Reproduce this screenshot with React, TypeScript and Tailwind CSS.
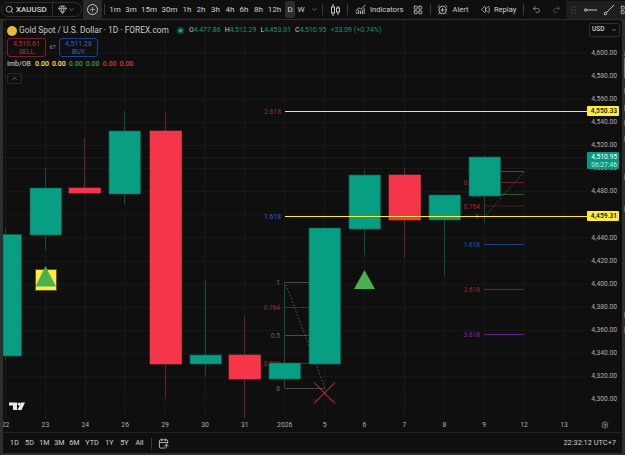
import React from 'react'
import { Search, ChevronDown, ChevronUp, Plus, Undo2, Redo2, AlarmClockPlus, ChartNoAxesCombined, LayoutGrid, Rewind, Gem, CalendarArrowUp, Settings } from 'lucide-react'

type Candle = { x: number; open: number; close: number; high: number; low: number; up: boolean }

const GREEN = '#089e84'
const RED = '#f5364a'

const candles: Candle[] = [
    { x: 3, open: 234.5, close: 356, high: 228, low: 360, up: true },
    { x: 30, open: 188, close: 235, high: 168, low: 250, up: true },
    { x: 69, open: 188, close: 193, high: 138, low: 193, up: false },
    { x: 109, open: 131, close: 194, high: 111, low: 204, up: true },
    { x: 150, open: 131, close: 364, high: 112, low: 398, up: false },
    { x: 190, open: 355, close: 364, high: 280, low: 375, up: true },
    { x: 229, open: 355, close: 379, high: 316, low: 418, up: false },
    { x: 269, open: 363, close: 379, high: 363, low: 388, up: true },
    { x: 309, open: 228, close: 364, high: 228, low: 364, up: true },
    { x: 349, open: 175, close: 229, high: 170, low: 255, up: true },
    { x: 389, open: 175, close: 220, high: 168, low: 258, up: false },
    { x: 429, open: 195, close: 220, high: 195, low: 276, up: true },
    { x: 469, open: 157, close: 196, high: 155, low: 223, up: true },
]

const prices = ['4,600.00', '4,580.00', '4,560.00', '4,540.00', '4,520.00', '4,500.00', '4,480.00', '', '4,440.00', '4,420.00', '4,400.00', '4,380.00', '4,360.00', '4,340.00', '4,320.00', '4,300.00']
const dates = ['22', '23', '24', '26', '29', '30', '31', '2026', '5', '6', '7', '8', '9', '12', '13']

const intervals = [
    { label: '1m', w: 'w-[16px]' },
    { label: '3m', w: 'w-[16px]' },
    { label: '15m', w: 'w-[20px]' },
    { label: '30m', w: 'w-[21px]' },
    { label: '1h', w: 'w-[14px]' },
    { label: '2h', w: 'w-[14px]' },
    { label: '3h', w: 'w-[15px]' },
    { label: '4h', w: 'w-[14px]' },
    { label: '6h', w: 'w-[14px]' },
    { label: '8h', w: 'w-[15px]' },
    { label: '12h', w: 'w-[17px]' },
]

const fibA = [
    { y: 282, label: '1', line: '#4a4a4a', text: '#787878' },
    { y: 307, label: '0.764', line: '#6e1f26', text: '#a32a33' },
    { y: 335, label: '0.5', line: '#2f5a34', text: '#3e7d44' },
    { y: 363, label: '0.236', line: '#6e1f26', text: '#a32a33' },
    { y: 388, label: '0', line: '#4a4a4a', text: '#787878' },
]

const fibB = [
    { y: 171, label: '0', line: '#4a4a4a', text: '#787878' },
    { y: 182, label: '0.236', line: '#6e1f26', text: '#a32a33' },
    { y: 194, label: '0.5', line: '#2f5a34', text: '#3e7d44' },
    { y: 205.5, label: '0.764', line: '#4d1a20', text: '#a32a33' },
    { y: 244, label: '1.618', line: '#1f3f8f', text: '#2a58c4' },
    { y: 289, label: '2.618', line: '#7a2329', text: '#a32a33' },
    { y: 334, label: '3.618', line: '#5f2185', text: '#7d2ca8' },
]

const sideMarks = [88, 105, 120, 136, 174, 206, 312, 327]

const ChartCanvas: React.FC = () => (
    <svg className="absolute inset-0 w-full h-full" viewBox="3 20 584 398" style={{ fontFamily: 'Roboto, sans-serif' }}>
        {prices.map((_, i) => (
            <line key={i} x1="3" x2="587" y1={53 + i * 23.13} y2={53 + i * 23.13} stroke="#1a1a1a" strokeWidth="1" />
        ))}
        {dates.map((_, i) => (
            <line key={i} x1={5.5 + i * 39.9} x2={5.5 + i * 39.9} y1="20" y2="418" stroke="#1a1a1a" strokeWidth="1" />
        ))}
        <line x1="3" x2="587" y1="157.5" y2="157.5" stroke="#12332d" strokeWidth="1" strokeDasharray="1 1" />

        {/* first fib */}
        <line x1="284.5" x2="284.5" y1="282" y2="388" stroke="#124f45" />
        {fibA.map((f) => (
            <g key={f.y}>
                <line x1="285" x2="325" y1={f.y + 0.5} y2={f.y + 0.5} stroke={f.line} />
                <text x="280" y={f.y + 3} fontSize="6.5" textAnchor="end" fill={f.text}>{f.label}</text>
            </g>
        ))}
        <line x1="286" y1="285" x2="325" y2="388" stroke="#5a5a5a" strokeDasharray="1.5 2" />

        {/* second fib */}
        <line x1="484.5" x2="484.5" y1="196" y2="223" stroke="#124f45" />
        {fibB.map((f) => (
            <g key={f.y}>
                <line x1="484" x2="524" y1={f.y + 0.5} y2={f.y + 0.5} stroke={f.line} />
                <text x="480" y={f.y + 3} fontSize="6.5" textAnchor="end" fill={f.text}>{f.label}</text>
            </g>
        ))}
        <line x1="486" y1="215" x2="524" y2="172" stroke="#5a5a5a" strokeDasharray="1.5 2" />
        <text x="479" y="219" fontSize="6.5" textAnchor="end" fill="#787878">1</text>

        {/* candles */}
        {candles.map((c) => {
            const color = c.up ? GREEN : RED
            const w = c.x === 3 ? 18.5 : 31.5
            const cx = c.x === 3 ? 5.5 : c.x + 15.5
            return (
                <g key={c.x}>
                    <line x1={cx} x2={cx} y1={c.high} y2={c.low} stroke={c.up ? '#0b4f43' : '#6b2029'} strokeWidth="1" />
                    <rect x={c.x} y={c.open} width={w} height={c.close - c.open} fill={color} stroke={c.up ? '#0a5f51' : RED} strokeWidth="0.6" />
                </g>
            )
        })}

        {/* levels */}
        <line x1="285" x2="587" y1="111.5" y2="111.5" stroke="#ffeb3b" strokeWidth="1.2" />
        <line x1="285" x2="587" y1="216.5" y2="216.5" stroke="#ffeb3b" strokeWidth="1.2" />
        <text x="281" y="114" fontSize="6.8" textAnchor="end" fill="#a32a33">2.618</text>
        <text x="281" y="219" fontSize="6.8" textAnchor="end" fill="#2a58c4">1.618</text>

        {/* signals */}
        <rect x="35.5" y="269.5" width="21" height="21" fill="#ffeb3b" stroke="#5c5520" />
        <polygon points="45.5,266 56,286.5 35.5,286.5" fill="#4caf50" />
        <polygon points="364.5,270 375,289 354,289" fill="#4caf50" />
        <path d="M314 382.5 L335 403.5 M335 382.5 L314 403.5" stroke="#e0404c" strokeWidth="1" />

        {/* tv logo */}
        <path d="M9 402.5 H17 V410 H13 V405.5 H9 Z" fill="#e8e8e8" />
        <circle cx="19" cy="404" r="1.5" fill="#e8e8e8" />
        <path d="M21 402.5 H25 L21.5 410 H17.5 Z" fill="#e8e8e8" />
    </svg>
)

const Legend: React.FC = () => (
    <div className="absolute left-[4px] top-[4px] flex flex-col">
        <div className="flex items-center h-[13px] text-[#c8c8c8]">
            <span className="w-[10px] h-[10px] rounded-full bg-[#e5b93c] mr-[2px] shrink-0" />
            <span className="text-[8.4px] whitespace-nowrap w-[158px]">Gold Spot / U.S. Dollar · 1D · FOREX.com</span>
            <span className="w-[7px] h-[7px] rounded-full bg-[#0b4f45] flex items-center justify-center mr-[5px] shrink-0">
                <span className="w-[3px] h-[3px] rounded-full bg-[#12c2a0]" />
            </span>
            <div className="flex text-[7px] whitespace-nowrap gap-[4px] text-[#089981]">
                <span><span className="text-[#c8c8c8]">O</span>4,477.86</span>
                <span><span className="text-[#c8c8c8]">H</span>4,512.29</span>
                <span><span className="text-[#c8c8c8]">L</span>4,453.01</span>
                <span><span className="text-[#c8c8c8]">C</span>4,510.95</span>
                <span>+33.09 (+0.74%)</span>
            </div>
        </div>
        <div className="flex items-center mt-[1px]">
            <div className="w-[39px] h-[19px] border border-[#7a1f28] rounded-[3px] flex flex-col items-center justify-center text-[7px] leading-[8px] text-[#c0303c]">
                <span>4,510.61</span>
                <span>SELL</span>
            </div>
            <span className="w-[13px] text-center text-[5.5px] text-[#9a9a9a]">67</span>
            <div className="w-[39px] h-[19px] border border-[#1f3f8f] rounded-[3px] flex flex-col items-center justify-center text-[7px] leading-[8px] text-[#2f62d8]">
                <span>4,511.28</span>
                <span>BUY</span>
            </div>
        </div>
        <div className="flex items-center h-[13px] mt-[1px] text-[7px] font-medium gap-[3px] text-[#b5b5b5]">
            <span className="w-[25px] whitespace-nowrap">Imb/OB</span>
            <span className="text-[#ffeb3b]">0.00</span>
            <span className="text-[#ffeb3b]">0.00</span>
            <span className="text-[#3f9a45]">0.00</span>
            <span className="text-[#3f9a45]">0.00</span>
            <span className="text-[#e0303e]">0.00</span>
            <span className="text-[#e0303e]">0.00</span>
        </div>
        <div className="w-[15px] h-[11px] mt-[2px] border border-[#2a2a2a] rounded-[2px] flex items-center justify-center">
            <ChevronUp size={7} className="text-[#c0c0c0]" />
        </div>
    </div>
)

const Divider: React.FC = () => <div className="w-px h-[11px] bg-[#3a3a3a] shrink-0" />

const App: React.FC = () => {
    return (
        <div className="relative w-[625px] h-[455px] bg-[#2e2e2e] overflow-hidden flex flex-col text-[#d0d0d0]" style={{ fontFamily: 'Roboto, sans-serif' }}>
            {/* Top toolbar */}
            <div className="h-[19px] bg-[#0f0f0f] flex items-center shrink-0 text-[8px]">
                <div className="ml-[1px] w-[81px] h-[15px] border border-[#2e2e2e] rounded-full flex items-center shrink-0">
                    <Search size={9} className="ml-[3px] mr-[2px] text-[#c8c8c8] shrink-0" />
                    <span className="font-medium text-[8px] w-[36px]">XAUUSD</span>
                    <div className="w-px h-full bg-[#2e2e2e] shrink-0" />
                    <Gem size={9} className="ml-[5px] text-[#c8c8c8] shrink-0" />
                    <ChevronDown size={7} className="ml-[1px] text-[#a0a0a0] shrink-0" />
                </div>
                <div className="w-[19px] h-[19px] ml-[1px] bg-[#2a2a2a] flex items-center justify-center shrink-0">
                    <div className="w-[11px] h-[11px] border border-[#c8c8c8] rounded-full flex items-center justify-center">
                        <Plus size={7} />
                    </div>
                </div>
                <div className="ml-[2px] mr-[2px]"><Divider /></div>
                <div className="flex items-center">
                    {intervals.map((i) => (
                        <span key={i.label} className={`${i.w} text-center`}>{i.label}</span>
                    ))}
                </div>
                <span className="w-[10px] h-[17px] ml-[2px] bg-[#2e2e2e] rounded-[2px] text-center leading-[17px]">D</span>
                <span className="w-[12px] text-center">W</span>
                <ChevronDown size={7} className="ml-[3.5px] mr-[4.5px] text-[#a0a0a0] shrink-0" />
                <Divider />
                <svg className="ml-[7.5px] mr-[7.5px] shrink-0" width="9" height="12" viewBox="0 0 9 12" fill="none" stroke="#c8c8c8">
                    <path d="M2 0v12M7 2v9" />
                    <rect x="0.5" y="3" width="3" height="6" fill="#0f0f0f" />
                    <rect x="5.5" y="4" width="3" height="4" fill="#0f0f0f" />
                </svg>
                <Divider />
                <ChartNoAxesCombined size={11} className="ml-[6.5px] mr-[4.5px] text-[#c8c8c8] shrink-0" />
                <span className="w-[32px] text-[7.5px] whitespace-nowrap">Indicators</span>
                <LayoutGrid size={10} className="ml-[11px] mr-[7px] text-[#c8c8c8] shrink-0" />
                <Divider />
                <AlarmClockPlus size={11} className="ml-[5.5px] mr-[5px] text-[#c8c8c8] shrink-0" />
                <span className="w-[16px] text-[7.5px]">Alert</span>
                <Rewind size={9} className="ml-[12px] mr-[4.5px] text-[#c8c8c8] shrink-0" />
                <span className="w-[22px] text-[7.5px]">Replay</span>
                <div className="ml-[7px]"><Divider /></div>
                <Undo2 size={9} className="ml-[7.5px] text-[#a0a0a0] shrink-0" />
                <Redo2 size={9} className="ml-[11px] text-[#5a5a5a] shrink-0" />
                <div className="ml-[5.5px] flex-1 h-[18px] bg-[#1e1e1e] rounded-bl-[4px] flex items-center overflow-hidden">
                    <svg className="ml-[4.5px] shrink-0" width="5" height="8" viewBox="0 0 5 8" fill="#555">
                        <circle cx="1" cy="1" r="0.7" /><circle cx="4" cy="1" r="0.7" />
                        <circle cx="1" cy="4" r="0.7" /><circle cx="4" cy="4" r="0.7" />
                        <circle cx="1" cy="7" r="0.7" /><circle cx="4" cy="7" r="0.7" />
                    </svg>
                    <svg className="ml-[8px] shrink-0" width="13" height="6" viewBox="0 0 13 6" fill="none" stroke="#c8c8c8">
                        <circle cx="1.7" cy="3" r="1.2" /><path d="M3 3h10" />
                    </svg>
                    <svg className="ml-[6.5px] shrink-0" width="12" height="12" viewBox="0 0 12 12" fill="none" stroke="#c8c8c8">
                        <path d="M1 11L11 1" /><circle cx="2.5" cy="9.5" r="1.2" fill="#1e1e1e" />
                    </svg>
                    <LayoutGrid size={10} className="ml-[5px] text-[#c8c8c8] shrink-0" />
                </div>
            </div>

            {/* Chart panel */}
            <div className="mt-[1px] ml-[3px] mr-[3px] h-[433px] bg-[#0f0f0f] flex flex-col rounded-t-[3px] overflow-hidden shrink-0">
                <div className="h-[398px] flex shrink-0">
                    <div className="relative w-[584px] h-full shrink-0">
                        <ChartCanvas />
                        <Legend />
                    </div>
                    <div className="relative flex-1 min-w-0">
                        <div className="absolute top-[3px] left-[2px] w-[31px] h-[14px] border border-[#2e2e2e] rounded-[2px] flex items-center justify-between px-[2px] text-[6.5px] font-medium">
                            USD <ChevronDown size={6} />
                        </div>
                        <div className="flex flex-col items-end pr-[5px] pt-[27.5px] text-[6.7px] text-[#b0b0b0]">
                            {prices.map((p, i) => (
                                <span key={i} className="h-[23.13px] leading-[11px]">{p}</span>
                            ))}
                        </div>
                        <div className="absolute left-0 top-[86px] w-[32px] h-[10px] bg-[#ffeb3b] rounded-[1px] text-[6.7px] font-medium leading-[10px] text-right pr-[2px] text-[#111]">4,550.33</div>
                        <div className="absolute left-0 top-[191px] w-[32px] h-[10px] bg-[#ffeb3b] rounded-[1px] text-[6.7px] font-medium leading-[10px] text-right pr-[2px] text-[#111]">4,459.31</div>
                        <div className="absolute left-0 top-[132px] w-[32px] h-[17px] bg-[#089981] rounded-[1px] text-[6.7px] leading-[8px] text-right pr-[2px] text-white flex flex-col justify-center">
                            <span>4,510.95</span>
                            <span className="text-[#c5ebe3]">06:27:46</span>
                        </div>
                    </div>
                </div>

                {/* Time axis */}
                <div className="h-[15px] flex items-center shrink-0 border-b border-[#222] text-[6.8px] text-[#b0b0b0] overflow-hidden">
                    <div className="flex ml-[-17.45px] w-[618px] shrink-0">
                        {dates.map((d) => (
                            <span key={d} className="w-[39.9px] text-center shrink-0">{d}</span>
                        ))}
                    </div>
                    <Settings size={8} className="ml-[-3px] text-[#a0a0a0] shrink-0" />
                </div>

                {/* Bottom bar */}
                <div className="flex-1 flex items-center pl-[4px] pr-[6px] text-[7.2px]">
                    <div className="flex items-center">
                        {['1D', '5D', '1M', '3M', '6M', 'YTD', '1Y', '5Y', 'All'].map((r) => (
                            <span key={r} className={r === 'YTD' ? 'w-[20px] text-center' : 'w-[15px] text-center'}>{r}</span>
                        ))}
                    </div>
                    <div className="ml-[4px]"><Divider /></div>
                    <CalendarArrowUp size={11} className="ml-[6px] text-[#c0c0c0] shrink-0" />
                    <span className="ml-auto text-[7.4px]">22:32:12 UTC+7</span>
                </div>
            </div>

            {/* Right edge markers */}
            <div className="absolute left-[624px] top-[52px] w-px h-[4px] bg-[#555]" />
            <div className="absolute left-[624px] top-[58px] w-px h-[20px] bg-[#777]" />
            {sideMarks.map((m) => (
                <div key={m} className="h-[6px] w-px bg-[#c23b44] absolute left-[624px]" style={{ top: m }} />
            ))}
        </div>
    )
}

export default App
